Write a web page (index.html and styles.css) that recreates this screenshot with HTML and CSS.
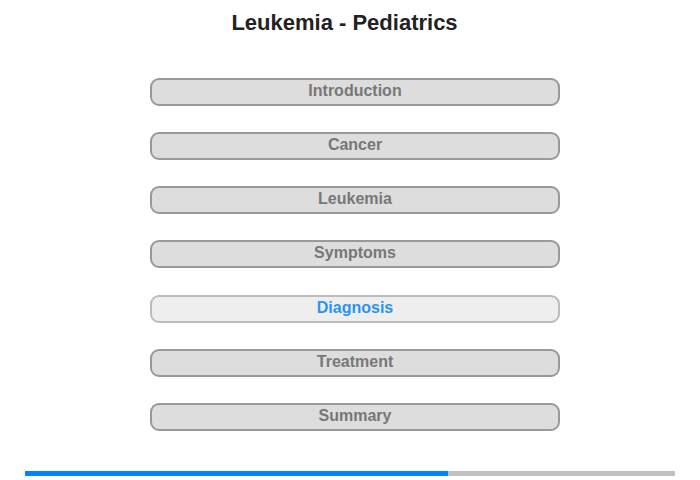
FILE: index.html
```html
<!DOCTYPE html>
<html>
<head>
<meta charset="utf-8">
<link rel="stylesheet" href="styles.css">
</head>
<body>
<div class="page">
  <h1 class="title">Leukemia - Pediatrics</h1>
  <nav class="menu">
    <div class="item">Introduction</div>
    <div class="item">Cancer</div>
    <div class="item">Leukemia</div>
    <div class="item">Symptoms</div>
    <div class="item active">Diagnosis</div>
    <div class="item">Treatment</div>
    <div class="item">Summary</div>
  </nav>
  <div class="progress"><div class="progress-fill" style="width:65%"></div></div>
</div>
</body>
</html>
```
FILE: styles.css
```css
html, body {
  margin: 0;
  padding: 0;
  background: #fff;
}
.page {
  width: 700px;
  height: 480px;
  padding-top: 10px;
  box-sizing: border-box;
  font-family: "Liberation Sans", Arial, sans-serif;
}
.title {
  margin: 0;
  padding-right: 11px;
  font-size: 22px;
  line-height: 26px;
  font-weight: bold;
  color: #222;
  text-align: center;
}
.menu {
  margin-top: 42px;
  padding-left: 10px;
  display: flex;
  flex-direction: column;
  align-items: center;
  gap: 26.17px;
}
.item {
  width: 410px;
  height: 28px;
  box-sizing: border-box;
  border: 2px solid #999;
  border-radius: 9px;
  background: #ddd;
  color: #777;
  font-size: 16px;
  font-weight: bold;
  line-height: 22px;
  padding-bottom: 2px;
  text-align: center;
}
.item.active {
  border-color: #bbb;
  background: #eee;
  color: #2b93f5;
}
.progress {
  margin: 40px 0 0 25px;
  width: 650px;
  height: 5px;
  background: #c0c0c0;
}
.progress-fill {
  height: 100%;
  background: #0084ff;
}
```
